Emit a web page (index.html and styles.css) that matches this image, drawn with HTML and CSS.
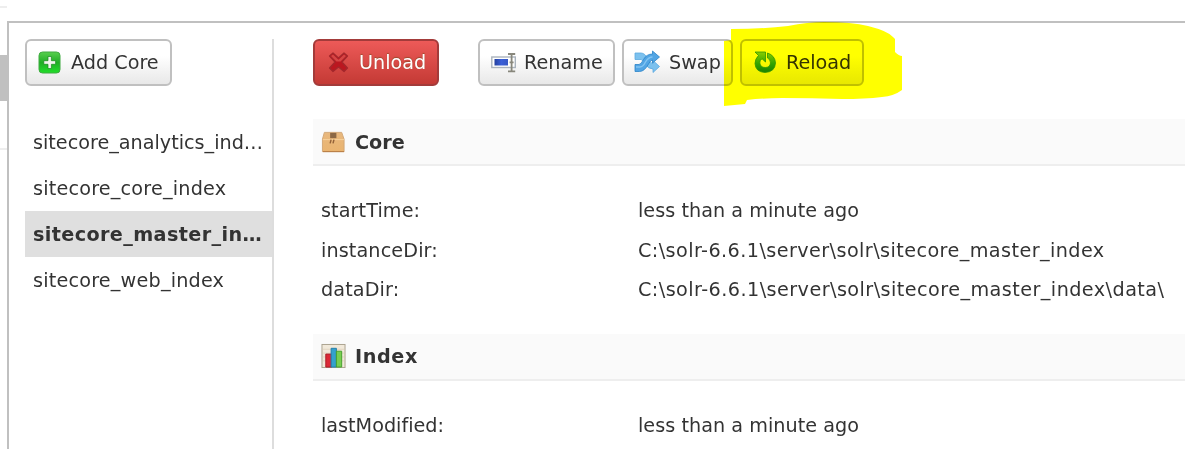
FILE: index.html
```html
<!DOCTYPE html>
<html lang="en">
<head>
<meta charset="utf-8">
<title>Solr Admin</title>
<link rel="stylesheet" href="styles.css">
</head>
<body>
<div class="gutter"><i class="rule first"></i><i class="tab"></i><i class="rule last"></i></div>
<div class="frame">
  <aside class="sidebar">
    <button class="btn add"><svg class="icon" viewBox="0 0 24 24"><defs><linearGradient id="gAdd" x2="0" y2="1"><stop stop-color="#58cf4e"/><stop offset=".5" stop-color="#20ad26"/><stop offset="1" stop-color="#22df2b"/></linearGradient></defs><rect x="1" y="2" width="21" height="21" rx="3.500" fill="url(#gAdd)" stroke="#3faa40"/><path d="M10 6.500h3.400v4.200h4.200v3.600h-4.200v4.200H10v-4.200H5.800v-3.600H10z" fill="#f2f5ee" stroke="#168b1c" stroke-width=".7"/></svg><span class="label">Add Core</span></button>
    <ul class="cores">
      <li><span class="t1">sitecore_analytics_ind…</span></li>
      <li><span class="t2">sitecore_core_index</span></li>
      <li class="current"><span class="t3">sitecore_master_in…</span></li>
      <li><span class="t4">sitecore_web_index</span></li>
    </ul>
  </aside>
  <main class="content">
    <nav class="actions">
      <button class="btn unload"><svg class="icon" viewBox="0 0 24 24"><path d="M3.500 6 7 3l5.500 5L18 3l3.500 3-5.500 6 5.500 6-3.500 3.500-5.500-4.500L7 21.500 3.500 18 9 12z" fill="#bb1720" stroke="#a3282c" stroke-width="1.200" stroke-linejoin="round"/><path d="m5 6 2-1.500 5.500 5.200L18 4.500 20 6l-5.500 5.500h-4z" fill="#d44745"/></svg><span class="label">Unload</span></button>
      <button class="btn rename"><svg class="icon wide" viewBox="0 0 26 24"><defs><linearGradient id="gRen"><stop stop-color="#23409f"/><stop offset=".5" stop-color="#3a5fd8"/><stop offset="1" stop-color="#3557c4"/></linearGradient></defs><rect x=".8" y="7" width="23.500" height="10.500" fill="#fff" stroke="#aab3bd" stroke-width="1.400"/><rect x="3.500" y="9" width="13.500" height="6.500" fill="url(#gRen)"/><path d="M17 4h3q.6 0 .6 1 0-1 .6-1h3M20.600 4v17M17 21.300h7.200M18.600 12.300h4" fill="none" stroke="#88877c" stroke-width="1.800"/></svg><span class="label">Rename</span></button>
      <button class="btn swap"><svg class="icon wide" viewBox="0 0 26 24"><path d="M1 3h6q4 0 7.500 6.500 2 4 4.500 4V10.500l6.500 6-6.500 6v-3.500q-5 0-8-5.500-2.500-4-4-4H1z" fill="#7cc1ee" stroke="#5aa8df" stroke-width=".8"/><path d="M1 21.500v-7h4q2 0 4.500-5Q12.500 4 18.500 4V1l7 6-7 6V10q-2 0-4 4-4 7.500-9 7.500z" fill="#52a5e4" stroke="#2b84c8" stroke-width=".8"/><path d="M2 17h4q3 0 5.500-5 3-5 7-5" fill="none" stroke="#83c5f2" stroke-width="1.400"/></svg><span class="label">Swap</span></button>
      <button class="btn reload"><svg class="icon" viewBox="0 0 24 24"><defs><linearGradient id="gRel" x2="0" y2="1"><stop stop-color="#8acd78"/><stop offset=".55" stop-color="#35a646"/><stop offset="1" stop-color="#1b8134"/></linearGradient></defs><path d="M2 2h10.500v10L9 8.700Q6.500 10.500 6.800 13q.7 4.500 5.400 4.500t5.300-4.500q0-3.700-3-5V3q7.500 2.500 8 10-.5 9-10.500 9.500Q2.500 22 2 13.500 2 9 5.500 5.500z" fill="url(#gRel)" stroke="#2f963b" stroke-width=".8"/></svg><span class="label">Reload</span></button>
      <svg class="marker" viewBox="0 0 180 90"><path d="M7 7Q38 7 64 4 84 0 100 0q28 0 44 4 20 5 25 11l2 2v13q4 4 7 4v34q-8 6-20 7-17 2-40 2-30-1-60-1-18 0-35 2l-2 4-21 2V19l7-1z" fill="#ff0"/></svg>
    </nav>
    <section>
      <h2><svg class="icon box" viewBox="0 0 26 24"><defs><linearGradient id="gBox" x2="0" y2="1"><stop stop-color="#e8b87e"/><stop offset="1" stop-color="#eab470"/></linearGradient></defs><path d="M3.500 2h18l2.500 7v13H1.500V9z" fill="url(#gBox)" stroke="#d2a878"/><path d="M2 9.500h22" stroke="#f8d19c"/><path d="M9.500 2.500h6.500v5.500H9.500z" fill="#8c6845"/><path d="M9.500 13.500l1-4m2 4 1-4" stroke="#946238" stroke-width="1.500"/><path d="M2 22h22" stroke="#b77a40"/></svg><span class="hCore">Core</span></h2>
      <dl>
        <dt class="d1">startTime:</dt><dd class="v1">less than a minute ago</dd>
        <dt class="d2">instanceDir:</dt><dd class="v2">C:\solr-6.6.1\server\solr\sitecore_master_index</dd>
        <dt class="d3">dataDir:</dt><dd class="v3">C:\solr-6.6.1\server\solr\sitecore_master_index\data\</dd>
      </dl>
    </section>
    <section>
      <h2 class="lower"><svg class="icon chart" viewBox="0 0 26 26"><rect x="1" y="1" width="24" height="24" fill="#f1e9da" stroke="#aaa18e"/><path d="M2 6h22M2 10h22M2 14h22M2 18h22" stroke="#dbcdb8" stroke-width=".7"/><path d="M5 24.500V11h6v13.500z" fill="#dc2936" stroke="#a91c26"/><path d="M10.500 24.500V5h5.500v19.500z" fill="#35a1cc" stroke="#217daa"/><path d="M16 24.500V8h5.500v16.500z" fill="#78ce50" stroke="#459f2c"/></svg><span class="hIndex">Index</span></h2>
      <dl><dt class="d4">lastModified:</dt><dd class="v1">less than a minute ago</dd></dl>
    </section>
  </main>
</div>
</body>
</html>
```
FILE: styles.css
```css
* { box-sizing: border-box; }
body { margin: 0; height: 449px; overflow: hidden; display: flex; background: #fff; color: #333; font: 19.2px/40px "DejaVu Sans", sans-serif; font-variant-ligatures: none; }
.gutter { width: 7px; flex: none; display: flex; flex-direction: column; padding-top: 6px; }
.rule { height: 2px; background: #eee; }
.tab { height: 46px; background: #c0c0c0; margin: 47px 0; }
.frame { flex: 1; min-width: 0; margin-top: 21px; border: solid #c0c0c0; border-width: 2px 0 0 2px; display: flex; padding: 16px 0 0 16px; }
.sidebar { width: 249px; flex: none; border-right: 2px solid #ddd; }
.btn { display: flex; align-items: center; height: 47px; padding: 0 0 2px 11px; gap: 9px; border: 2px solid #c0c0c0; border-radius: 6px; background: linear-gradient(#fff 35%, #e8e8e8); color: #333; font: inherit; white-space: nowrap; }
.label { padding-top: 2px; }
.icon { width: 24px; height: 24px; flex: none; }
.add { width: 147px; }
.cores { list-style: none; margin: 33px 0 0; padding: 0; }
.cores li { height: 46px; line-height: 48px; padding-left: 8px; white-space: nowrap; }
.cores .current { background: #dfdfdf; font-weight: bold; }
.t2, .t4 { letter-spacing: .2px; }
.t3 { letter-spacing: .38px; }
.content { flex: 1; min-width: 0; padding-left: 39px; }
.actions { display: flex; position: relative; }
.unload { width: 126px; margin-right: 39px; border-color: #a33b3a; background: linear-gradient(#ed5a58, #c43a35); color: #fff; text-shadow: 0 -1px 1px #9b4a2c; }
.rename { width: 137px; margin-right: 7px; gap: 7px; }
.swap { width: 111px; margin-right: 7px; padding-left: 10px; }
.reload { width: 124px; }
.marker { position: absolute; left: 411px; top: -17px; width: 180px; height: 90px; mix-blend-mode: multiply; pointer-events: none; }
.wide { width: 26px; }
h2 { display: flex; align-items: center; gap: 9px; height: 47px; margin: 33px 0 0; padding-left: 8px; border-bottom: 2px solid #eee; background: #fafafa; font-size: 19.2px; line-height: 45px; }
.hCore { padding-top: 1px; }
.hIndex { letter-spacing: .6px; }
.box { width: 25px; }
.chart { width: 25px; height: 26px; }
dl { display: grid; grid-template-columns: 317px 1fr; grid-auto-rows: 39.600px; margin: 25px 0 0; padding-left: 8px; line-height: 40px; white-space: nowrap; }
dt, dd { margin: 0; }
.d1 { letter-spacing: .1px; }
.d2, .d3 { letter-spacing: .12px; }
.v1 { letter-spacing: .04px; }
.v2 { letter-spacing: .43px; }
.v3 { letter-spacing: .45px; }
section + section h2 { margin-top: 24px; }
```
